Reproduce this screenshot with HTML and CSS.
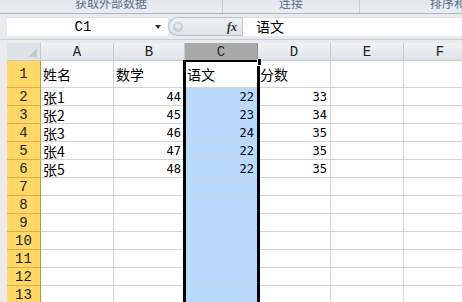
FILE: index.html
```html
<!DOCTYPE html>
<html lang="zh-CN">
<head>
    <meta charset="UTF-8">
    <title>Excel - 语文</title>
    <link rel="stylesheet" href="styles.css">
</head>
<body>
    <div class="ribbon">
        <div class="group g1"><span>获取外部数据</span></div>
        <div class="group g2"><span>连接</span></div>
        <div class="group g3"><span>排序和筛选</span></div>
    </div>

    <div class="fbar">
        <div class="namebox">
            <span class="ref">C1</span>
            <span class="arrow"></span>
        </div>
        <div class="grip">
            <span class="knob"></span>
            <span class="fx">fx</span>
        </div>
        <div class="formula">语文</div>
    </div>

    <div class="sheet">
        <div class="row head">
            <div class="corner"><span class="tri"></span></div>
            <div class="col">A</div>
            <div class="col">B</div>
            <div class="col sel">C</div>
            <div class="col">D</div>
            <div class="col">E</div>
            <div class="col">F</div>
        </div>
        <div class="row first">
            <div class="num">1</div>
            <div class="cell">姓名</div>
            <div class="cell">数学</div>
            <div class="cell active">语文</div>
            <div class="cell">分数</div>
            <div class="cell"></div>
            <div class="cell"></div>
        </div>
        <div class="row">
            <div class="num">2</div>
            <div class="cell">张1</div>
            <div class="cell n">44</div>
            <div class="cell n blue">22</div>
            <div class="cell n">33</div>
            <div class="cell"></div>
            <div class="cell"></div>
        </div>
        <div class="row">
            <div class="num">3</div>
            <div class="cell">张2</div>
            <div class="cell n">45</div>
            <div class="cell n blue">23</div>
            <div class="cell n">34</div>
            <div class="cell"></div>
            <div class="cell"></div>
        </div>
        <div class="row">
            <div class="num">4</div>
            <div class="cell">张3</div>
            <div class="cell n">46</div>
            <div class="cell n blue">24</div>
            <div class="cell n">35</div>
            <div class="cell"></div>
            <div class="cell"></div>
        </div>
        <div class="row">
            <div class="num">5</div>
            <div class="cell">张4</div>
            <div class="cell n">47</div>
            <div class="cell n blue">22</div>
            <div class="cell n">35</div>
            <div class="cell"></div>
            <div class="cell"></div>
        </div>
        <div class="row">
            <div class="num">6</div>
            <div class="cell">张5</div>
            <div class="cell n">48</div>
            <div class="cell n blue">22</div>
            <div class="cell n">35</div>
            <div class="cell"></div>
            <div class="cell"></div>
        </div>
        <div class="row"><div class="num">7</div><div class="cell"></div><div class="cell"></div><div class="cell blue"></div><div class="cell"></div><div class="cell"></div><div class="cell"></div></div>
        <div class="row"><div class="num">8</div><div class="cell"></div><div class="cell"></div><div class="cell blue"></div><div class="cell"></div><div class="cell"></div><div class="cell"></div></div>
        <div class="row"><div class="num">9</div><div class="cell"></div><div class="cell"></div><div class="cell blue"></div><div class="cell"></div><div class="cell"></div><div class="cell"></div></div>
        <div class="row"><div class="num">10</div><div class="cell"></div><div class="cell"></div><div class="cell blue"></div><div class="cell"></div><div class="cell"></div><div class="cell"></div></div>
        <div class="row"><div class="num">11</div><div class="cell"></div><div class="cell"></div><div class="cell blue"></div><div class="cell"></div><div class="cell"></div><div class="cell"></div></div>
        <div class="row"><div class="num">12</div><div class="cell"></div><div class="cell"></div><div class="cell blue"></div><div class="cell"></div><div class="cell"></div><div class="cell"></div></div>
        <div class="row"><div class="num">13</div><div class="cell"></div><div class="cell"></div><div class="cell blue"></div><div class="cell"></div><div class="cell"></div><div class="cell"></div></div>
        <div class="row last"><div class="num"></div><div class="cell"></div><div class="cell"></div><div class="cell blue"></div><div class="cell"></div><div class="cell"></div><div class="cell"></div></div>

        <!-- selection outline around column C -->
        <div class="selection"></div>
        <div class="handle"></div>
    </div>
</body>
</html>
```

FILE: styles.css
```css
* {
    box-sizing: border-box;
}

body {
    margin: 0;
    width: 462px;
    height: 302px;
    overflow: hidden;
    background: #e9ebee;
    font-family: "Noto Sans CJK SC", sans-serif;
    font-size: 14px;
    color: #000;
}

/* ribbon group labels, cut off at the top */
.ribbon {
    display: flex;
    height: 14px;
    overflow: hidden;
    background: linear-gradient(#e3e8ee, #e9edf2);
    border-bottom: 1px solid #aab3bf;
}

.group {
    display: flex;
    justify-content: center;
    align-items: flex-end;
    flex-shrink: 0;
    font-size: 12px;
    line-height: 20px;
    color: #5d6e86;
    border-right: 1px solid #c3cad3;
}

.g1 { width: 223px; }
.g2 { width: 137px; }
.g3 { width: 200px; border-right: none; }

/* formula bar */
.fbar {
    display: flex;
    height: 26px;
    padding: 3px 0 0 7px;
    border-bottom: 1px solid #c9ced5;
}

.namebox {
    display: flex;
    align-items: center;
    width: 161px;
    height: 19px;
    background: #fff;
    border-top: 1px solid #dcdfe4;
}

.ref {
    flex: 1;
    text-align: center;
    font-family: "Liberation Mono", monospace;
    font-size: 14px;
    line-height: 16px;
    padding-left: 4px;
}

.arrow {
    width: 0;
    height: 0;
    margin-right: 7px;
    border-left: 3px solid transparent;
    border-right: 3px solid transparent;
    border-top: 4px solid #333;
}

.grip {
    display: flex;
    align-items: center;
    width: 75px;
    height: 19px;
    background: linear-gradient(#eef0f3, #dfe3e8);
    border: 1px solid #b7bec8;
    border-right: 1px solid #c1c7cf;
    border-radius: 10px 0 0 10px;
}

.knob {
    width: 10px;
    height: 10px;
    margin-left: 4px;
    border-radius: 50%;
    background: radial-gradient(circle at 50% 35%, #f4f5f7, #b8bec6);
    border: 1px solid #c3c8cf;
}

.fx {
    margin-left: auto;
    margin-right: 5px;
    font-family: "Liberation Serif", serif;
    font-style: italic;
    font-weight: bold;
    font-size: 12px;
    line-height: 14px;
    color: #333;
}

.formula {
    flex: 1;
    height: 19px;
    line-height: 17px;
    padding-left: 13px;
    background: #fff;
    border-top: 1px solid #dcdfe4;
}

/* worksheet */
.sheet {
    position: relative;
    height: 262px;
    overflow: hidden;
    margin-top: 3px;
    margin-left: 7px;
    background: #fff;
}

.row {
    display: grid;
    grid-template-columns: 34px 73px 71px 73px 73px 73px 73px;
    height: 18px;
}

.row.first {
    height: 27px;
}

.row > div {
    display: flex;
    align-items: center;
    line-height: 16px;
    border-right: 1px solid #d4d4d4;
    border-bottom: 1px solid #d4d4d4;
    white-space: nowrap;
    overflow: hidden;
}

.head > div {
    justify-content: center;
    background: linear-gradient(#f1f3f5, #dfe3e8);
    border-right: 1px solid #c4cad2;
    border-bottom: 1px solid #c4cad2;
    font-family: "Liberation Mono", monospace;
    font-size: 14px;
    color: #222;
}

.head > .corner {
    position: relative;
    background: #dfe3e8;
}

.tri {
    position: absolute;
    right: 3px;
    bottom: 3px;
    width: 0;
    height: 0;
    border-left: 9px solid transparent;
    border-bottom: 9px solid #c3c8cf;
}

.head > .sel {
    background: #a9a9a9;
    border-right-color: #8f8f8f;
    color: #2b2b2b;
}

.row > .num {
    justify-content: center;
    background: #ffd867;
    border-right: 1px solid #c5953f;
    border-bottom: 1px solid #e2ac4e;
    font-family: "Liberation Mono", monospace;
    font-size: 14px;
    color: #222;
}

.cell {
    padding: 0 3px 0 2px;
}

.cell.n {
    justify-content: flex-end;
    font-family: "DejaVu Sans Mono", monospace;
    font-size: 12px;
}

.row > .blue {
    background: #badafd;
    border-bottom-color: #c8d7e8;
}

.selection {
    position: absolute;
    left: 176px;
    top: 17px;
    width: 77px;
    height: 260px;
    border: 3px solid #000;
    border-top-width: 2px;
    pointer-events: none;
}

.handle {
    position: absolute;
    left: 250px;
    top: 16px;
    width: 5px;
    height: 7px;
    background: #000;
    border: 1px solid #fff;
    border-top: none;
}
```
